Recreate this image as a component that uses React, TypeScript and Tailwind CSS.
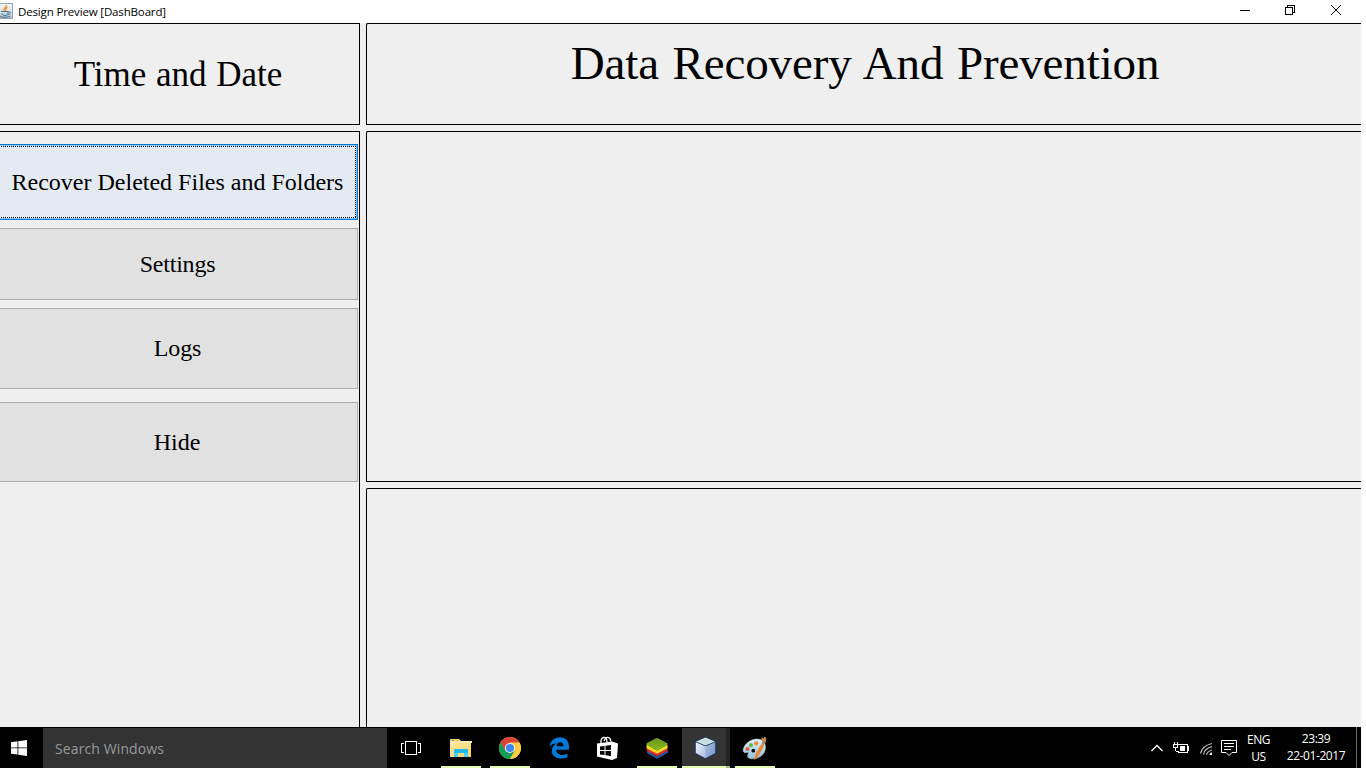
import React from "react";

const serif = "font-['Liberation_Serif',serif] text-black whitespace-nowrap";
const ui = "font-['Open_Sans','Noto_Sans',sans-serif] whitespace-nowrap";

function JavaIcon() {
  return (
    <svg className="block h-4 w-[13px] shrink-0" viewBox="3 0 13 16">
      <defs>
        <linearGradient id="java" x1="0" y1="0" x2="0" y2="1">
          <stop offset="0" stopColor="#f3f6f8" />
          <stop offset="0.5" stopColor="#dbe3e8" />
          <stop offset="1" stopColor="#9fb9c8" />
        </linearGradient>
      </defs>
      <rect x="0.5" y="0.5" width="15" height="15" fill="url(#java)" stroke="#93a5b1" />
      <path d="M9.5 2C10 4 6 5 7 8M10.5 4C8 5.5 9 6.500 8.500 8" stroke="#ed8b32" strokeWidth="1.3" fill="none" />
      <path d="M4 8.500h7v1.500c0 2-1 2.500-3 2.500s-3-.500-3-2M11 9c3-1 3 2 0 2.500M3 13.500c2 1 8 1 10 0" stroke="#4e7896" strokeWidth="1" fill="none" />
    </svg>
  );
}

function TitleBar() {
  return (
    <header className="flex h-[23px] items-start bg-white">
      <div className="flex flex-1 pt-[3px]">
        <JavaIcon />
        <span className={`${ui} ml-[5px] text-[11.500px] leading-[17px] tracking-[-0.15px] text-black`}>Design Preview [DashBoard]</span>
      </div>
      <svg className="block h-[22px] w-[138px]" viewBox="1223 0 138 22" shapeRendering="crispEdges" fill="none" stroke="#000">
        <path d="M1240 10.500h10" />
        <path d="M1285.500 7.500h7v7h-7zM1287.500 7V5.500h7v7h-2" />
        <path d="M1331 5l10 10M1341 5l-10 10" shapeRendering="auto" />
      </svg>
    </header>
  );
}

function Panel({ className, children }: { className: string; children?: React.ReactNode }) {
  return <section className={`border-black bg-[#efefef] ${className}`}>{children}</section>;
}

function SideButton({ label, className }: { label: string; className: string }) {
  return (
    <button className={`${serif} block w-[358px] border border-l-0 border-[#adadad] bg-[#e1e1e1] text-center text-[24px] leading-none ${className}`}>
      {label}
    </button>
  );
}

function Sidebar() {
  return (
    <Panel className="h-[596px] w-[360px] border-t border-r pt-3">
      <button className="block h-[76px] w-[358px] border-y border-r border-[#0078d7] bg-[#8cc3ed] py-px pr-px">
        <span className={`${serif} relative flex h-full items-center justify-center bg-[#e3eaf1] text-[24px] leading-none`}>
          <svg className="absolute inset-0 h-[72px] w-[356px]" viewBox="0 0 356 72" fill="none" stroke="#000" strokeDasharray="1 1" shapeRendering="crispEdges">
            <path d="M1 .500H356M355.500 0V72M1 71.500H356" />
          </svg>
          <span className="relative pr-px pb-px">Recover Deleted Files and Folders</span>
        </span>
      </button>
      <SideButton label="Settings" className="mt-2 h-[72px] pr-[2px] pb-px tracking-[-0.220px]" />
      <SideButton label="Logs" className="mt-2 h-[81px] pr-[2px] pb-[2px] tracking-[-0.100px]" />
      <SideButton label="Hide" className="mt-[13px] h-[80px] pr-[3px]" />
    </Panel>
  );
}

function WindowsLogo() {
  return (
    <svg className="block h-4 w-4" viewBox="0 0 16 16" fill="#fff">
      <path d="M0 2.200 6.500 1.300v6.200H0zM7.300 1.200 16 0v7.500H7.300zM0 8.300h6.500v6.300L0 13.700zM7.300 8.300H16V16l-8.700-1.200z" />
    </svg>
  );
}

function TaskIcons() {
  return (
    <svg className="block h-[41px] w-[394px] shrink-0" viewBox="387 727 394 41">
      <defs>
        <linearGradient id="folder" x1="0" y1="0" x2="1" y2="1">
          <stop offset="0" stopColor="#ffe9a2" />
          <stop offset="1" stopColor="#f6d36c" />
        </linearGradient>
        <linearGradient id="green" x1="0" y1="0" x2="0" y2="1">
          <stop offset="0" stopColor="#68941e" />
          <stop offset="1" stopColor="#8dbb1c" />
        </linearGradient>
        <linearGradient id="cubeLeft" x1="0" y1="0" x2="1" y2="1">
          <stop offset="0" stopColor="#edf3fc" />
          <stop offset="1" stopColor="#a9bfe2" />
        </linearGradient>
        <linearGradient id="cubeRight" x1="0" y1="0" x2="1" y2="1">
          <stop offset="0" stopColor="#a9c0e2" />
          <stop offset="1" stopColor="#7593cb" />
        </linearGradient>
        <linearGradient id="palette" x1="0" y1="0" x2="0" y2="1">
          <stop offset="0" stopColor="#e4f0f7" />
          <stop offset="1" stopColor="#91c3de" />
        </linearGradient>
      </defs>
      <g fill="none" stroke="#fff" shapeRendering="crispEdges">
        <path d="M405.500 741.500h11v13h-11zM404 743.500h-2.500v9h2.500M418 743.500h2.500v9h-2.500" />
      </g>
      <path d="M450 740q0-1 1-1h8l2 2h10v16h-21z" fill="url(#folder)" />
      <path d="M451 739.500h8l1 1.500h-9z" fill="#f4c64b" />
      <path d="M452 740h2v1h-2z" fill="#2bb2d7" />
      <path d="M450 742h10l2-1h10v2h-22z" fill="#ffebb1" />
      <path d="M454 750q0-1 1-1h12q1 0 1 1v7h-4v-4h-6v4h-4z" fill="#22b9ef" />
      <path d="M454 753h4v4h-4zM464 753h4v4h-4z" fill="#49d0f2" />

      <circle cx="510" cy="748" r="11" fill="#ffcd40" />
      <path d="M500.470 742.500A11 11 0 0 1 519.530 742.500H510L504.800 751z" fill="#db4437" />
      <path d="M500.470 742.500A11 11 0 0 0 510 759L515 750.500 505.200 750.500z" fill="#0f9d58" />
      <path d="M510 743h9.700A11 11 0 0 1 510 759l5-8.500z" fill="#ffcd40" />
      <circle cx="510" cy="748" r="5.100" fill="#f4f5ed" />
      <circle cx="510" cy="748" r="4.100" fill="#4285f4" />

      <path d="M549.500 746.500C550.500 740 555 737.200 560 737.200C566 737.200 569 741.500 569 747V749.700H556.200C556.500 755.500 563.500 756 567.500 753.500V757.300C560 760.500 551.500 757.500 551.800 750.500C552 747.500 553.500 745 556.500 743.500C553.500 743.500 551 744.500 549.500 746.500ZM556.500 746.200H563.500C563.600 740.700 556.800 741 556.500 746.200Z" fill="#0078d7" />

      <path d="M597 743.500 612 741.500 618 743.500 617 758 612 760 597 756.500z" fill="#fff" />
      <path d="M601 743V740.500q.500-2.500 2.500-3 2-.500 3 1.500l.500 3M604 741l1-2q2-3 5-.500l1 3" fill="none" stroke="#fff" strokeWidth="1.300" />
      <path d="M600 746.500 604.500 746v4H600zM605.500 745.800 611 745v5h-5.500zM600 751h4.500v4L600 754.500zM605.500 751H611v5l-5.500-.800z" fill="#000" />

      <path d="M647 750 657 756.500 668 750V752q0 .700-1 1.200l-9 5q-1 .600-2 0l-8-4.500q-1-.700-1-1.700z" fill="#245ca4" />
      <path d="M646.500 747.500 657 753.500 667.500 747.500V750q0 .700-1 1.200l-8.500 4.500q-1 .600-2 0l-8.500-4.500q-1-.700-1-1.700z" fill="#df292d" />
      <path d="M646.500 744.500 657 750.500 667.500 744.500V747.500q0 .700-1 1.200l-8.500 4.500q-1 .600-2 0l-8.500-4.500q-1-.700-1-1.700z" fill="#f7df28" />
      <path d="M647 743 656 738.300q1-.500 2 0L667 743q1.300.700 0 2l-9 5q-1 .500-2 0l-9-5q-1.300-1.300 0-2z" fill="url(#green)" />

      <path d="M682 728h44v40h-44z" fill="#343434" />
      <path d="M726 728h4v40h-4z" fill="#242424" />
      <path d="M705.500 737 716 741.200V753.200L705.500 759 695 753.200V741.200z" fill="#20355f" stroke="#20355f" strokeLinejoin="round" />
      <path d="M705.500 737.500 715 741.400 705.500 745.500 696 741.400z" fill="#c9dfdf" />
      <path d="M695.800 742.300 705 746.300V758l-9.200-5z" fill="url(#cubeLeft)" />
      <path d="M706 746.300 715.200 742.300V753L706 758z" fill="url(#cubeRight)" />
      <path d="M705.500 746v12" stroke="#eaf5ff" strokeWidth=".700" />

      <path d="M743.200 750C744 744 750 739.500 757 739C763 739 766 743 765.300 749C764.500 755 759 758.700 752.500 758.700C747 758.700 747 755.800 748.500 753.500C750 751 742.500 755 743.200 750Z" fill="url(#palette)" stroke="#bdd6e3" strokeWidth=".500" />
      <circle cx="747.500" cy="749" r="2" fill="#da5a44" />
      <circle cx="751" cy="745.200" r="2.100" fill="#69b943" />
      <circle cx="756.200" cy="743.300" r="2.100" fill="#ef8b38" />
      <circle cx="753.300" cy="750.700" r="1.900" fill="#080b10" />
      <path d="M754 760Q755 753 761.500 744L764 745Q760 756 754 760z" fill="#e98a32" />
      <path d="M761.500 744 762.500 741q-2-2.500-.500-3.500l1.500.500 1-1.500 2 2-.500 3-2 3.500z" fill="#b98552" />

      <g fill="#e3fbb0">
        <path d="M441 766h40v2h-40zM490 766h40v2h-40zM637 766h40v2h-40zM682 766h44v2h-44zM735 766h40v2h-40z" />
        <path d="M726 766h4v2h-4z" fill="#a9bb84" />
      </g>
    </svg>
  );
}

function TrayIcons() {
  return (
    <svg className="block h-[41px] w-[90px] shrink-0" viewBox="1150 727 90 41" fill="none" stroke="#fff">
      <path d="M1151.500 751 1157 745.500l5.500 5.500" strokeWidth="1.300" />
      <g shapeRendering="crispEdges">
        <path d="M1179 744.500h8.500v8h-9.500V751M1188.500 746v5M1174.500 742v2M1177.500 742v2M1173 744.500h6M1173.500 745v2h4v-2M1175.500 747v4M1176 751.500h2" />
        <path d="M1180 746h5v5h-5z" fill="#fff" stroke="none" />
      </g>
      <path d="M1200.500 753.500Q1202.500 745.500 1212 743.500M1203.500 754.500Q1204.500 748.500 1212 746.700M1206.500 755Q1207 751.500 1212 750" stroke="#bababa" strokeWidth="1.200" />
      <path d="M1209.500 755q0-2.500 2.500-2.500v2.500z" fill="#fff" stroke="none" />
      <path d="M1221.500 740.500h15v12h-4.500l-3 3-3-3h-4.500zM1224 743.500h10M1224 746.500h10M1224 749.500h7" />
    </svg>
  );
}

function Taskbar() {
  return (
    <footer className="flex h-[41px] bg-black">
      <div className="flex w-[43px] items-start pt-[13px] pl-[11px]"><WindowsLogo /></div>
      <div className={`${ui} mt-px h-10 w-[344px] bg-[#333] pt-[11px] pl-3 text-[14px] leading-[20px] tracking-[0.11px] text-[#969a9c]`}>Search Windows</div>
      <TaskIcons />
      <div className="flex-1" />
      <TrayIcons />
      <div className={`${ui} w-[37px] pt-[4px] text-center text-[12px] leading-[17px] tracking-[-0.450px] text-white`}>
        <div>ENG</div><div>US</div>
      </div>
      <div className={`${ui} w-[78px] pt-[3px] text-center text-[12px] leading-[17px] tracking-[-0.420px] text-white`}>
        <div>23:39</div><div>22-01-2017</div>
      </div>
      <div className="w-px" />
      <div className="h-full w-px bg-[#666]" />
      <div className="w-1" />
    </footer>
  );
}

export default function App() {
  return (
    <div className="h-[768px] w-[1366px] overflow-hidden bg-white">
      <div className="flex h-full w-[1361px] flex-col">
        <TitleBar />
        <main className="flex h-[704px] gap-[6px] bg-[#f0eff0]">
          <div className="flex w-[360px] flex-col gap-[6px]">
            <Panel className="h-[102px] w-[360px] border-y border-r pt-[31px] pr-[3px] text-center">
              <h2 className={`${serif} text-[35px] leading-[40px] [word-spacing:1px]`}>Time and Date</h2>
            </Panel>
            <Sidebar />
          </div>
          <div className="flex w-[995px] flex-col gap-[6px]">
            <Panel className="h-[102px] rounded-tl-[2px] border-y border-l pt-[12px] pl-[2px] text-center">
              <h1 className={`${serif} text-[47px] leading-[54px] tracking-[-0.120px] [word-spacing:2px]`}>Data Recovery And Prevention</h1>
            </Panel>
            <Panel className="h-[351px] rounded-tl-[2px] border-y border-l" />
            <Panel className="h-[239px] rounded-tl-[2px] border-t border-l" />
          </div>
        </main>
        <Taskbar />
      </div>
    </div>
  );
}
